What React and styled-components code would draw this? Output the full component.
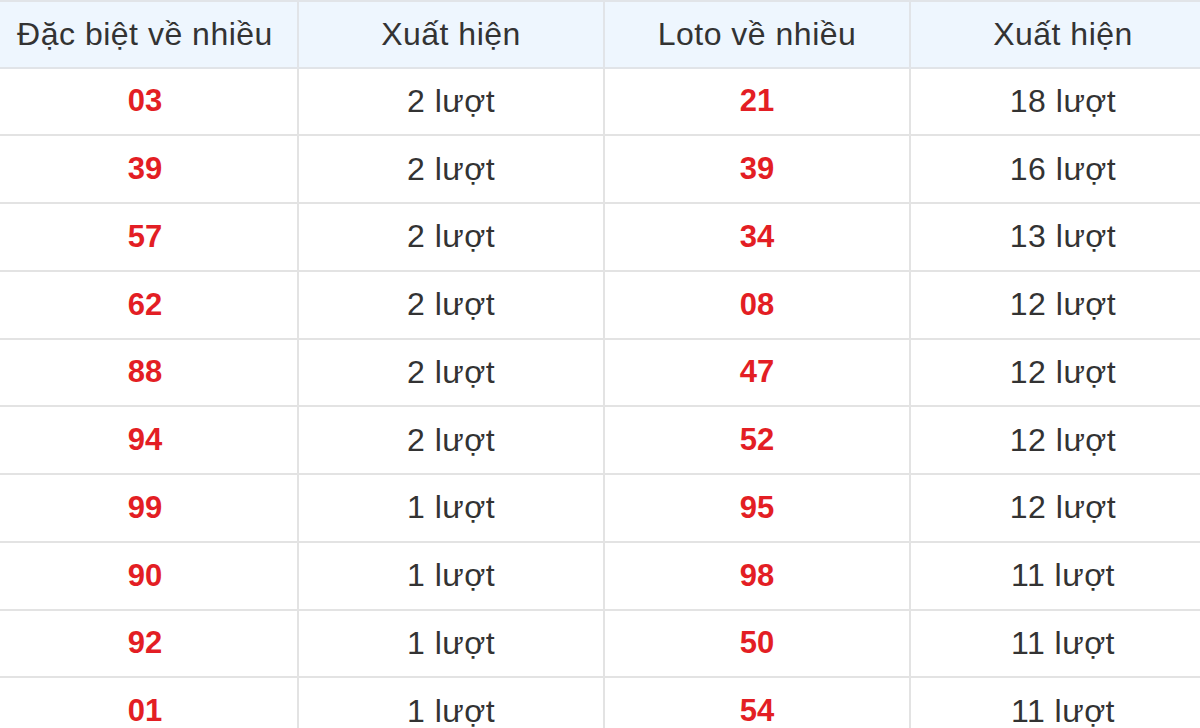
import styled, { createGlobalStyle } from 'styled-components';

const GlobalStyle = createGlobalStyle`
  html, body {
    margin: 0;
    padding: 0;
    background: #ffffff;
    overflow: hidden;
  }
  body {
    font-family: 'Liberation Sans', Arial, sans-serif;
  }
`;

const Wrap = styled.div`
  width: 1200px;
  height: 728px;
  overflow: hidden;
`;

const Table = styled.table`
  margin-left: -9px;
  width: 1226px;
  border-collapse: collapse;
  table-layout: fixed;
  font-family: 'Liberation Sans', Arial, sans-serif;
  font-size: 32px;
  color: #333333;
`;

const HeadCell = styled.th`
  height: 64.5px;
  padding: 0;
  background: #eef6fe;
  border: 2px solid #e1e4e8;
  font-weight: normal;
  letter-spacing: 0.5px;
  text-align: center;
  vertical-align: middle;
`;

const Row = styled.tr`
  height: 67.75px;
`;

const Cell = styled.td`
  padding: 0;
  border: 2px solid #e3e3e3;
  text-align: center;
  vertical-align: middle;
  color: ${(p) => (p.$red ? '#e31e24' : '#333333')};
  font-weight: ${(p) => (p.$red ? 'bold' : 'normal')};
  font-size: ${(p) => (p.$red ? '31px' : '32px')};
  letter-spacing: ${(p) => (p.$red ? '0' : '0.5px')};
`;

const rows = [
  ['03', 2, '21', 18],
  ['39', 2, '39', 16],
  ['57', 2, '34', 13],
  ['62', 2, '08', 12],
  ['88', 2, '47', 12],
  ['94', 2, '52', 12],
  ['99', 1, '95', 12],
  ['90', 1, '98', 11],
  ['92', 1, '50', 11],
  ['01', 1, '54', 11],
];

export default function App() {
  return (
    <Wrap>
      <GlobalStyle />
      <Table>
        <thead>
          <tr>
            <HeadCell>Đặc biệt về nhiều</HeadCell>
            <HeadCell>Xuất hiện</HeadCell>
            <HeadCell>Loto về nhiều</HeadCell>
            <HeadCell>Xuất hiện</HeadCell>
          </tr>
        </thead>
        <tbody>
          {rows.map((r, i) => (
            <Row key={i}>
              <Cell $red>{r[0]}</Cell>
              <Cell>{r[1]} lượt</Cell>
              <Cell $red>{r[2]}</Cell>
              <Cell>{r[3]} lượt</Cell>
            </Row>
          ))}
        </tbody>
      </Table>
    </Wrap>
  );
}
